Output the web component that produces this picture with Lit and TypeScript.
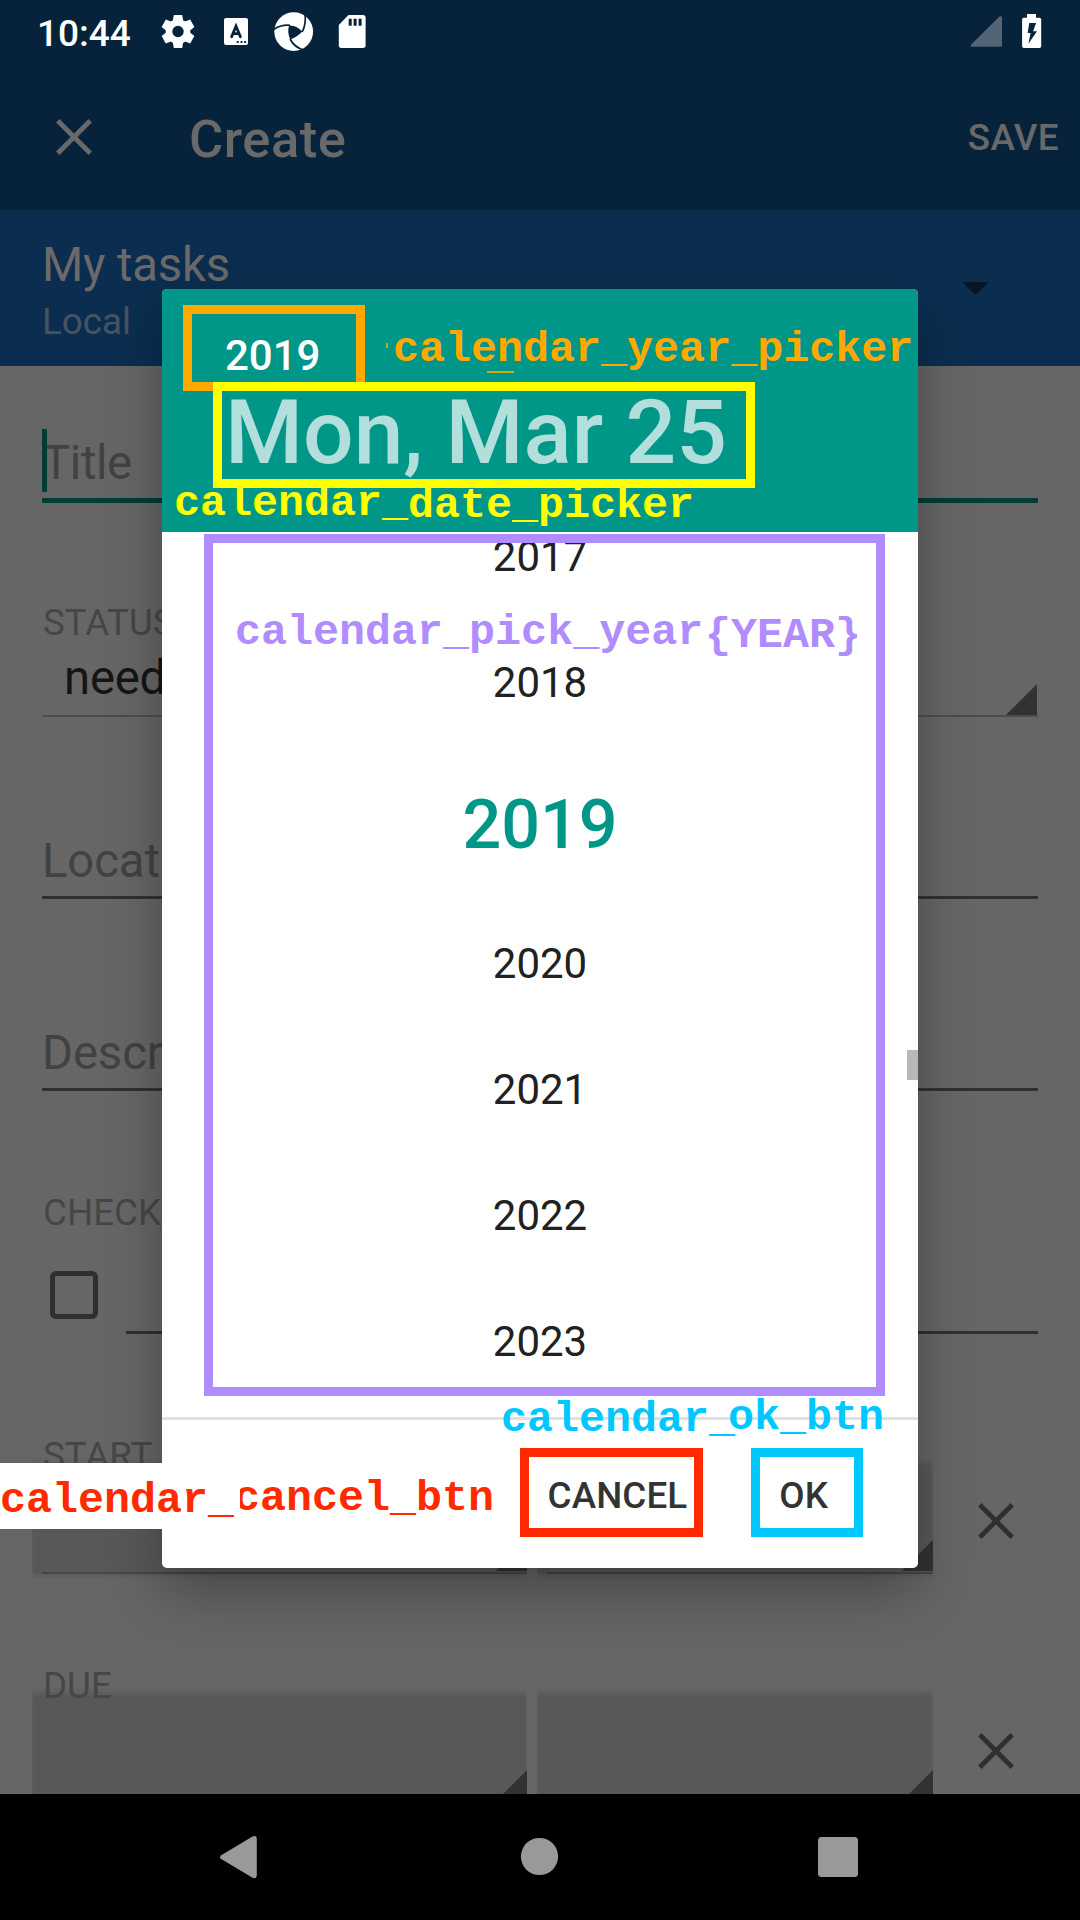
import { LitElement, html, css, svg } from "lit";
import { customElement } from "lit/decorators.js";

interface Frame { tone: string; x: number; y: number; w: number; h: number }
interface Label { tone: string; x: number; base: number; text: string }

const FRAMES: Frame[] = [
  { tone: "orange", x: 183, y: 305, w: 182, h: 86 },
  { tone: "yellow", x: 213, y: 382, w: 542, h: 106 },
  { tone: "purple", x: 204, y: 534, w: 681, h: 862 },
  { tone: "red", x: 520, y: 1448, w: 183, h: 89 },
  { tone: "cyan", x: 751, y: 1448, w: 112, h: 89 },
];

const LABELS: Label[] = [
  { tone: "orange", x: 393, base: 361, text: "calendar_year_picker" },
  { tone: "yellow", x: 174, base: 515, text: "calendar_" },
  { tone: "yellow", x: 408, base: 517, text: "date_picker" },
  { tone: "purple", x: 235, base: 644, text: "calendar_pick_year" },
  { tone: "purple", x: 705, base: 647, text: "{YEAR}" },
  { tone: "cyan", x: 501, base: 1431, text: "calendar_" },
  { tone: "cyan", x: 728, base: 1429, text: "ok_btn" },
  { tone: "red", x: 0, base: 1512, text: "calendar_" },
  { tone: "red shaved", x: 234, base: 1510, text: "cancel_btn" },
];

const YEARS = [2017, 2018, 2019, 2020, 2021, 2022, 2023];

const cross = () => html`<svg class="cross" viewBox="0 0 36 36" width="36" height="36">
  <path d="M1.8 1.8 34.2 34.2M34.2 1.8 1.8 34.2" stroke="currentColor" stroke-width="4.8" fill="none" />
</svg>`;

/** Status strip at the top of the screen. */
@customElement("status-strip")
export class StatusStrip extends LitElement {
  static styles = css`
    :host { display: flex; height: 63px; align-items: flex-start; color: #fff; }
    .clock { font: 500 37px/44px Roboto, sans-serif; padding: 12px 0 0 37px; width: 117px; white-space: nowrap; }
    .left { width: 230px; height: 63px; }
    .right { width: 110px; height: 63px; margin-left: auto; }
  `;
  render() {
    const teeth = [0, 60, 120, 180, 240, 300];
    return html`
      <div class="clock">10:44</div>
      <svg class="left" viewBox="154 0 230 63">
        <g fill="#fff">
          ${teeth.map((a) => svg`<path transform=${`rotate(${a} 178 31.5)`} d="M173.800 15h8.400l1.400 8h-11.200z" />`)}
        </g>
        <circle cx="178" cy="31.5" r="9" fill="none" stroke="#fff" stroke-width="6.6" />
        <rect x="224" y="18" width="24" height="27" rx="2" fill="#fff" />
        <path d="M231.6 36.8 236 26.2 240.4 36.8M233.4 33.6h5.2" fill="none" stroke="#07233b" stroke-width="2.8" stroke-linecap="round" />
        <path d="M236.8 41h1.9v2h-1.9zM240.6 41h1.9v2h-1.9zM244.2 41h1.9v2h-1.9z" fill="#07233b" />
        <circle cx="293.7" cy="31.6" r="19.4" fill="#fff" />
        <path d="M289.2 25.4Q296.5 25 302.3 31.6Q297.5 37 290.3 39.4Q286.8 32 289.2 25.4Z" fill="#07233b" />
        <g fill="none" stroke="#07233b" stroke-width="1.7">
          <path d="M273.8 29.6Q280.5 24.6 290 25.3" />
          <path d="M302.2 31.8Q306.5 24 304.9 12.5" />
          <path d="M290 39Q294.5 47.5 303.8 50" />
        </g>
        <path d="M348.5 15H363a2.6 2.6 0 0 1 2.6 2.6V45.3a2.6 2.6 0 0 1-2.6 2.6H341.4a2.6 2.6 0 0 1-2.6-2.6V25z" fill="#fff" />
        <path d="M348.7 18.7h3v7h-3zM353.6 18.7h3v7h-3zM358.6 18.7h3v7h-3z" fill="#07233b" />
      </svg>
      <svg class="right" viewBox="970 0 110 63">
        <path d="M1002 17.5V45.5q0 1.3-1.3 1.3H972q-2.3-.5-.8-2.3L999.500 16.500q2-1 2.500 1z" fill="#536575" />
        <path d="M1027 14h9v3.800h3.500q1.700 0 1.700 1.700V46.300q0 1.700-1.700 1.700h-15.700q-1.700 0-1.700-1.700V19.500q0-1.700 1.700-1.700h3.200z" fill="#fff" />
        <path d="M1029.300 23h6.800l-3 8.200h3.900l-8.600 12.600 2.200-10.800h-3z" fill="#07233b" />
      </svg>
    `;
  }
}

/** The dimmed task form that lies behind the dialog. */
@customElement("task-form")
export class TaskForm extends LitElement {
  static styles = css`
    :host { display: block; height: 1428px; overflow: hidden; isolation: isolate; background: #666; box-sizing: border-box; }
    * { box-sizing: border-box; }
    .field { margin: 0 42px; display: flex; flex-direction: column; justify-content: flex-end; padding-bottom: 5px; border-bottom: 3px solid #313131; }
    .hint { font: 400 47.25px/60px Roboto, sans-serif; letter-spacing: -0.1px; color: #424242; white-space: nowrap; }
    .caption { font: 400 36.75px/44px Roboto, sans-serif; color: #464646; padding-left: 1px; white-space: nowrap; }
    .title { height: 137px; border-bottom: 5px solid #033d37; }
    .title .hint { position: relative; letter-spacing: -0.4px; }
    .caret { position: absolute; left: 0; top: -4px; width: 5px; height: 63px; background: #003d36; }
    .status { height: 214px; padding: 0 0 7px; border-bottom: 2px solid #4d4d4d; position: relative; }
    .value { font: 400 47.25px/60px Roboto, sans-serif; letter-spacing: -0.2px; color: #151515; padding: 3px 0 0 22px; }
    .status .corner { position: absolute; right: 1px; bottom: 0; width: 31px; height: 31px; }
    .corner { background: #323232; clip-path: polygon(100% 0, 100% 100%, 0 100%); }
    .place { height: 182px; }
    .desc { height: 192px; }
    .checks { padding: 100px 42px 0; height: 243px; }
    .item { display: flex; height: 99px; justify-content: space-between; }
    .box { width: 48px; height: 48px; margin: 36px 0 0 8px; border: 5.5px solid #2f2f2f; border-radius: 6px; }
    .line { width: 912px; border-bottom: 3px solid #313131; }
    .date { padding: 100px 0 0; height: 240px; }
    .date.due { padding-top: 90px; height: 230px; }
    .date .caption { margin-left: 42px; position: relative; z-index: 1; }
    .row { display: flex; gap: 10px; padding-left: 32px; margin-top: -20px; color: #2f2f2f; }
    .spin { height: 116px; display: flex; align-items: flex-end; justify-content: flex-end; padding-bottom: 3px; position: relative; z-index: 0; }
    .spin::before { content: ""; position: absolute; inset: 7px 2px 1px 1px; background: #585858; box-shadow: 0 0 6px 2px #585858; clip-path: inset(-8px -2px -6px -1px); z-index: -1; }
    .spin::after { content: ""; position: absolute; left: 10px; right: 0; bottom: 0; height: 2px; background: #464646; }
    .spin .corner { width: 31px; height: 31px; }
    .day { width: 495px; }
    .hour { width: 396px; }
    .cross { margin: 45px 0 0 35px; }
  `;
  private dateRow() {
    return html`<div class="row">
      <div class="spin day"><div class="corner"></div></div>
      <div class="spin hour"><div class="corner"></div></div>
      ${cross()}
    </div>`;
  }
  render() {
    return html`
      <div class="field title"><div class="hint">Title<span class="caret"></span></div></div>
      <div class="field status">
        <div class="caption">STATUS</div>
        <div class="value">needs action</div>
        <div class="corner"></div>
      </div>
      <div class="field place"><div class="hint">Location</div></div>
      <div class="field desc"><div class="hint">Description</div></div>
      <div class="checks">
        <div class="caption">CHECKLIST</div>
        <div class="item"><div class="box"></div><div class="line"></div></div>
      </div>
      <div class="date"><div class="caption">START</div>${this.dateRow()}</div>
      <div class="date due"><div class="caption">DUE</div>${this.dateRow()}</div>
    `;
  }
}

/** Year picker dialog. */
@customElement("year-dialog")
export class YearDialog extends LitElement {
  static styles = css`
    :host { display: flex; flex-direction: column; width: 756px; height: 1279px; border-radius: 5px; overflow: hidden; background: #fff; font-family: Roboto, sans-serif; }
    .head { height: 243px; background: #009688; padding: 40px 0 0 63px; box-sizing: border-box; flex: none; }
    .year { font-size: 42px; line-height: 54px; font-weight: 500; color: #fff; }
    .day { font-size: 89.25px; line-height: 100px; font-weight: 500; color: #b2dfdb; white-space: nowrap; }
    .list { height: 885px; display: flex; flex-direction: column; justify-content: flex-end; overflow: hidden; position: relative; flex: none; box-sizing: border-box; }
    .item { flex: none; height: 126px; line-height: 126px; text-align: center; font-size: 42px; color: #212121; }
    .item.on { height: 155px; line-height: 159px; font-size: 68.25px; font-weight: 500; color: #009688; }
    .rest { flex: none; height: 12px; }
    .thumb { position: absolute; right: 0; top: 518px; width: 11px; height: 30px; background: #b8b8b8; }
    .foot { border-top: 3px solid #e0e0e0; flex: 1; display: flex; justify-content: flex-end; padding: 54px 90px 0 0; gap: 92px; font-size: 36.75px; line-height: 44px; font-weight: 500; letter-spacing: 0.1px; color: #333; }
  `;
  render() {
    return html`
      <div class="head">
        <div class="year">2019</div>
        <div class="day">Mon, Mar 25</div>
      </div>
      <div class="list">
        ${YEARS.map((y) => html`<div class="item ${y === 2019 ? "on" : ""}">${y}</div>`)}
        <div class="rest"></div>
        <div class="thumb"></div>
      </div>
      <div class="foot"><span>CANCEL</span><span>OK</span></div>
    `;
  }
}

@customElement("app-root")
export class AppRoot extends LitElement {
  static styles = css`
    :host { display: block; position: relative; width: 1080px; height: 1920px; overflow: hidden; background: #07233b; font-family: Roboto, sans-serif; }
    .bar { height: 147px; display: flex; align-items: center; box-sizing: border-box; padding: 0 21px 0 56px; color: #696969; }
    .bar h1 { margin: 0; padding: 4px 0 0 97px; font-size: 52.5px; line-height: 60px; font-weight: 500; letter-spacing: 0.5px; }
    .save { margin-left: auto; padding-top: 2px; font-size: 36.75px; line-height: 44px; font-weight: 500; letter-spacing: 0.4px; }
    .account { height: 156px; background: #0b2e50; display: flex; justify-content: space-between; box-sizing: border-box; padding: 27px 91px 0 42px; }
    .name { font-size: 47.25px; line-height: 56px; letter-spacing: -0.15px; color: #6c6a69; }
    .kind { font-size: 36.75px; line-height: 44px; margin-top: 7px; color: #455460; }
    .arrow { width: 27px; height: 13px; margin-top: 45px; background: #051526; clip-path: polygon(0 0, 100% 0, 50% 100%); }
    .nav { height: 126px; background: #000; display: block; }
    .shade { position: absolute; left: 162px; top: 289px; border-radius: 5px; box-shadow: 0 24px 56px rgba(0, 0, 0, 0.3); height: 1279px; }
    .patch { position: absolute; left: 0; top: 1463px; width: 163px; height: 66px; background: #fff; }
    .frame { position: absolute; box-sizing: border-box; border: 9px solid currentColor; }
    .label { position: absolute; font: 700 43.35px/50px "Liberation Mono", monospace; white-space: pre; }
    .shaved { clip-path: inset(0 0 0 6px); }
    .dash { position: absolute; left: 487px; top: 371px; width: 27px; height: 2px; background: #d9a70d; }
    .speck { position: absolute; left: 386px; top: 343px; width: 2px; height: 5px; background: #c9a513; }
    .orange { color: #ffa800; }
    .yellow { color: #ffff00; }
    .purple { color: #b18cff; }
    .red { color: #ff2a00; }
    .cyan { color: #00c8ff; }
  `;
  render() {
    return html`
      <status-strip></status-strip>
      <div class="bar">${cross()}<h1>Create</h1><span class="save">SAVE</span></div>
      <div class="account">
        <div><div class="name">My tasks</div><div class="kind">Local</div></div>
        <div class="arrow"></div>
      </div>
      <task-form></task-form>
      <svg class="nav" viewBox="0 1794 1080 126" width="1080" height="126" fill="#999">
        <path d="M221.200 1855.300 252.500 1836.500q4.300-1.600 4.300 2.500v36q0 4.300-4.300 2.700L221.200 1859q-2.400-1.800 0-3.700z" />
        <circle cx="539.500" cy="1856.500" r="18.600" />
        <rect x="818" y="1837" width="40" height="40" rx="3.500" />
      </svg>
      <div class="shade"><year-dialog></year-dialog></div>
      <div class="patch"></div>
      <div class="dash"></div>
      <div class="speck"></div>
      ${FRAMES.map((f) => html`<div class="frame ${f.tone}" style="left:${f.x}px;top:${f.y}px;width:${f.w}px;height:${f.h}px"></div>`)}
      ${LABELS.map((l) => html`<div class="label ${l.tone}" style="left:${l.x}px;top:${l.base - 36}px">${l.text}</div>`)}
    `;
  }
}
